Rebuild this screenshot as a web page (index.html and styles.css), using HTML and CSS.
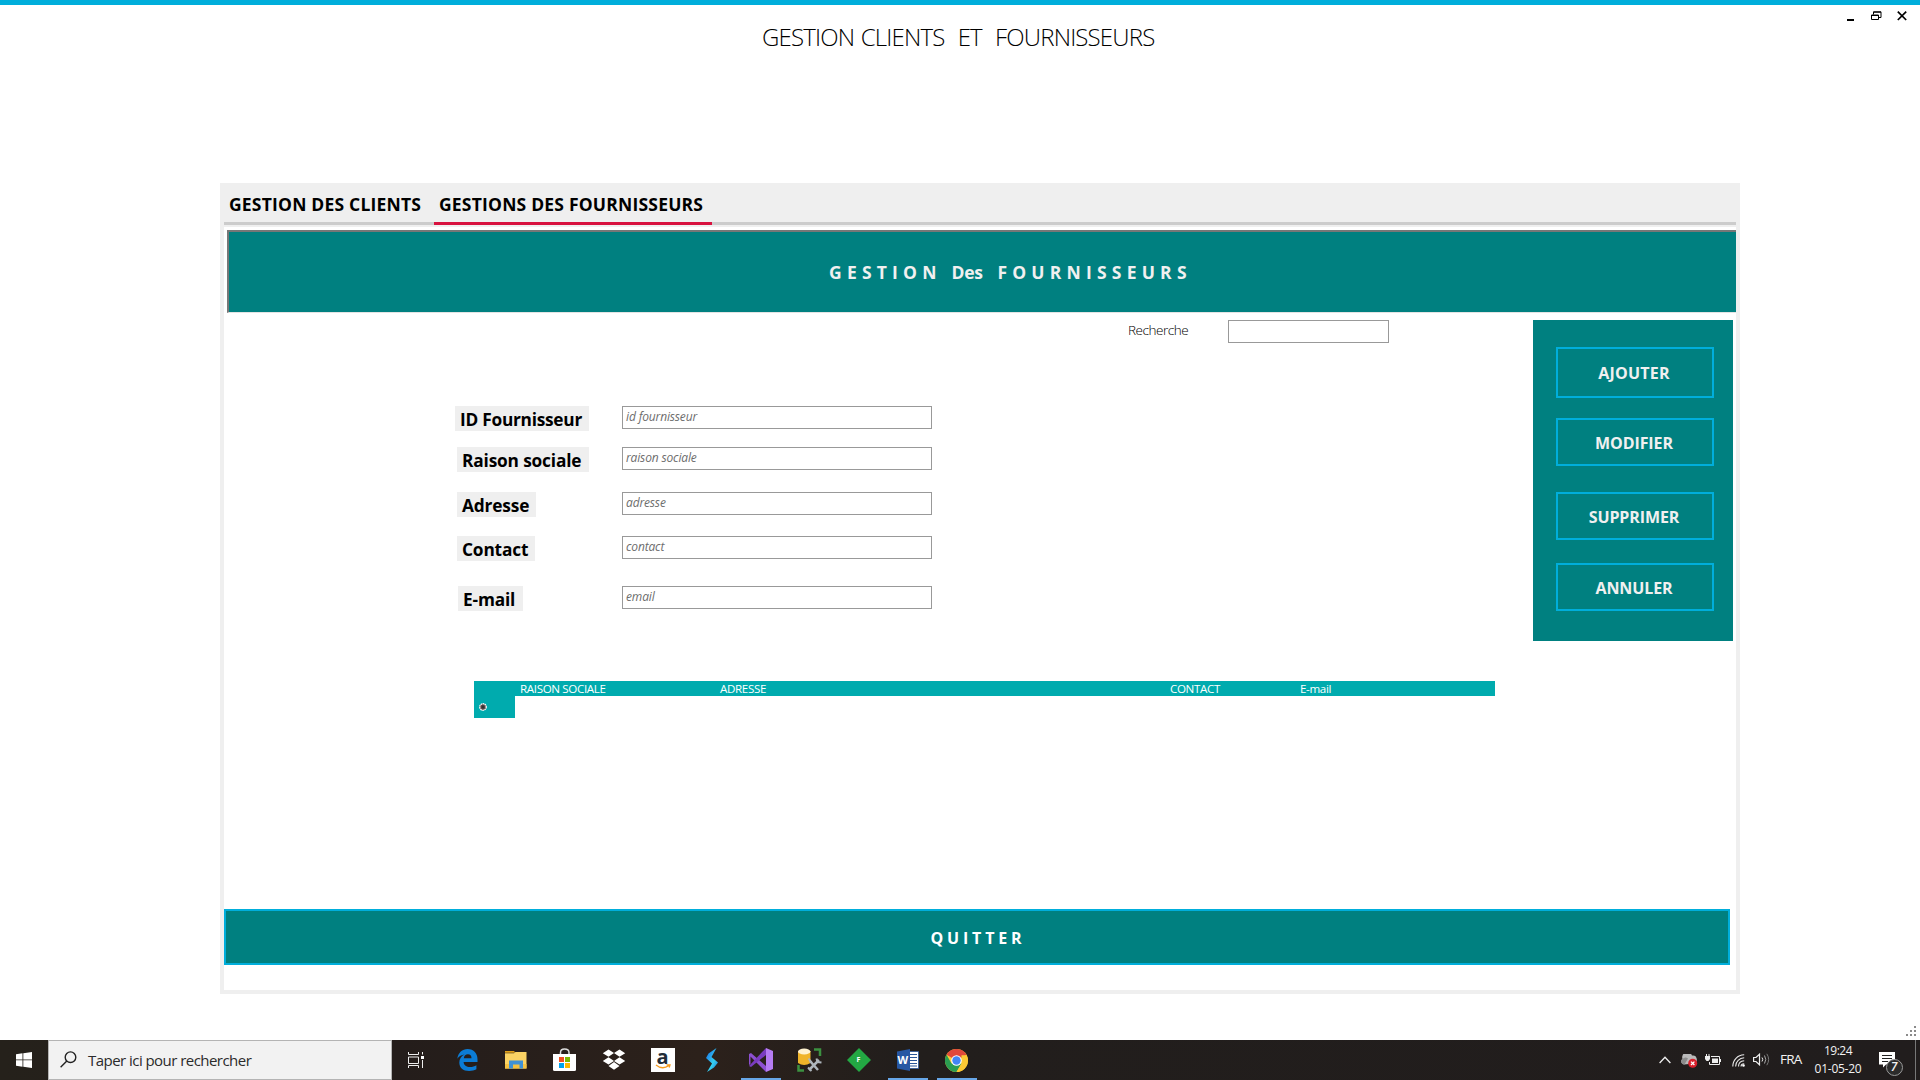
FILE: index.html
```
<!DOCTYPE html>
<html lang="fr">
<head>
<meta charset="utf-8">
<title>Gestion clients et fournisseurs</title>
<link rel="stylesheet" href="styles.css">
</head>
<body>
<main class="window">
  <header class="titlebar">
    <h1 class="title">GESTION CLIENTS  ET  FOURNISSEURS</h1>
    <div class="controls">
      <svg width="8" height="10" viewBox="0 0 8 10"><path d="M0 8h7v2H0z"/></svg>
      <svg width="11" height="10" viewBox="0 0 11 10"><path d="M2.5 3.5V.8H10V6.500H8M2.500 1.200H10" fill="none" stroke="#000"/><path d="M.5 4H7.500V8.500H.5zM.5 4.500H7.500" fill="none" stroke="#000"/></svg>
      <svg width="10" height="10" viewBox="0 0 10 10"><path d="M.8.6 9.200 9M9.200.6.8 9" stroke="#000" stroke-width="1.700"/></svg>
    </div>
  </header>

  <section class="panel">
    <nav class="tabs">
      <a class="tab">GESTION DES CLIENTS</a>
      <a class="tab tab-active">GESTIONS DES FOURNISSEURS</a>
    </nav>
    <div class="page">
      <h2 class="banner">G E S T I O N   <span class="small-word">Des</span>   F O U R N I S S E U R S</h2>
      <div class="body">
        <form class="form">
          <label class="row"><span class="label">ID Fournisseur</span><input class="field" placeholder="id fournisseur"></label>
          <label class="row row-2"><span class="label">Raison sociale</span><input class="field" placeholder="raison sociale"></label>
          <label class="row row-3"><span class="label">Adresse</span><input class="field" placeholder="adresse"></label>
          <label class="row row-4"><span class="label">Contact</span><input class="field" placeholder="contact"></label>
          <label class="row row-5"><span class="label">E-mail</span><input class="field" placeholder="email"></label>
        </form>
        <label class="search"><span class="search-label">Recherche</span><input class="search-field"></label>
        <aside class="actions">
          <button class="action action-add">AJOUTER</button>
          <button class="action action-edit">MODIFIER</button>
          <button class="action action-delete">SUPPRIMER</button>
          <button class="action action-cancel">ANNULER</button>
        </aside>
      </div>
      <div class="grid">
        <div class="grid-head">
          <span></span><span>RAISON SOCIALE</span><span>ADRESSE</span><span>CONTACT</span><span>E-mail</span>
        </div>
        <div class="grid-new">
          <svg width="8" height="8" viewBox="0 0 8 8"><circle cx="4" cy="4" r="3.300" fill="#6b5555" stroke="#fff" stroke-width="1.200" stroke-dasharray="1.600 .5"/><circle cx="4" cy="4" r="1.700" fill="#333"/></svg>
        </div>
      </div>
      <button class="quit">Q U I T T E R</button>
    </div>
  </section>
  <svg class="grip" width="10" height="10" viewBox="0 0 10 10"><path fill="#8a8a8a" d="M8 0h2v2H8zM4 4h2v2H4zM8 4h2v2H8zM0 8h2v2H0zM4 8h2v2H4zM8 8h2v2H8z"/></svg>
</main>

<footer class="taskbar">
  <div class="start"><svg width="16" height="16" viewBox="0 0 16 16" fill="#fff"><path d="M0 2.200 6.500 1.300V7.500H0zM7.300 1.200 16 0V7.500H7.300zM0 8.300H6.500V14.700L0 13.800zM7.300 8.300H16V16L7.300 14.800z"/></svg></div>
  <div class="finder">
    <svg width="17" height="17" viewBox="0 0 17 17" fill="none" stroke="#222" stroke-width="1.400"><circle cx="10.500" cy="6.200" r="5.300"/><path d="M6.800 10 .6 16.200"/></svg>
    <span>Taper ici pour rechercher</span>
  </div>
  <div class="app app-view"><svg width="17" height="16" viewBox="0 0 17 16" fill="none" stroke="#eee"><path d="M.5 0V2.500H10.500V0M.5 5H10.500V11.500H.5zM.5 16V13.500H10.500V16M14.500 0V2.500M14.500 8V16"/><path d="M13 4h3v3h-3z" fill="#fff" stroke="none"/></svg></div>
  <div class="app app-edge"><svg width="21" height="22" viewBox="0 0 21 22"><path fill="#0c7cd5" d="M.3 9.700C1.300 3.500 5.200 0 10.600 0 16.800 0 20.500 4.400 20.500 10.200V13H6.600C6.800 16.500 9.500 18 13 18 15.500 18 17.700 17.300 19.400 16.200V20.300C17.400 21.500 14.800 22 12.200 22 6 22 2.300 18.500 2.300 13.500 2.300 9.800 4.300 7 7.600 5.500 4.600 5.800 2 7.300.3 9.700zM6.800 9.300H14.500C14.500 6.800 13.300 5.300 10.900 5.300 8.600 5.300 7.100 6.900 6.800 9.300z"/></svg></div>
  <div class="app"><svg width="22" height="20" viewBox="0 0 22 20"><path fill="#e3a21a" d="M0 1h9l1.500 1.800H0z"/><path fill="#fbd364" d="M0 3.200h9L10.500 2H21.500V18.500H0z"/><path fill="#f5c243" d="M0 14h21.500v4.500H0z"/><path fill="#3f92d6" d="M4 10.500H18V18.500H14.500V14.500H8V18.500H4z"/></svg></div>
  <div class="app"><svg width="23" height="24" viewBox="0 0 23 24"><path d="M7.500 7V4.500C7.500 2 9.500 1 11.500 1S16 2 16 4.500V7" fill="none" stroke="#ddd" stroke-width="1.500"/><path d="M0 6H23V21.500Q23 23 21.500 23H1.500Q0 23 0 21.500z" fill="#fff"/><path fill="#f05022" d="M6 9h5v5H6z"/><path fill="#7eb900" d="M12 9h5v5h-5z"/><path fill="#00a3ee" d="M6 15h5v5H6z"/><path fill="#feb800" d="M12 15h5v5h-5z"/></svg></div>
  <div class="app"><svg width="24" height="22" viewBox="0 0 24 22" fill="#fff"><path d="M6.500.5 12 4 6.500 7.800.8 4.300zM17.500.5 23.200 4.300 17.500 7.800 12 4zM6.500 8.200 12 12 6.500 15.600.8 12zM17.500 8.200 23.200 12 17.500 15.600 12 12zM12 13 17.500 17 12 20.700 6.500 17z"/></svg></div>
  <div class="app"><div class="amazon">a<svg width="16" height="5" viewBox="0 0 16 5"><path d="M1 1C5 4.300 10 4.300 14 1.500M11.500.8H15L14.200 3.500" fill="none" stroke="#f79b1c" stroke-width="1.300"/></svg></div></div>
  <div class="app"><svg width="14" height="24" viewBox="0 0 14 24"><defs><linearGradient id="bolt" x2="1" y2="1"><stop stop-color="#1565e8"/><stop offset=".6" stop-color="#36d0ef"/><stop offset="1" stop-color="#1872e0"/></linearGradient></defs><path fill="url(#bolt)" d="M11.500 0 3.500 5.500 1 10 7 15.500 2 24 9 19.500 13 14.500 6.500 9z"/></svg></div>
  <div class="app running"><svg width="24" height="24" viewBox="0 0 24 24"><path fill="#8d4fd0" d="M0 6 2 5 17 18V24L1.500 8.500 1.500 16 0 17z"/><path fill="#7a3cc0" d="M0 18 17 0V7L2 19z"/><path fill="#b57cf2" d="M17 0 24 3V21L17 24z"/></svg></div>
  <div class="app"><svg width="25" height="24" viewBox="0 0 25 24"><path d="M17 1.500H23V8M1.500 17V22.500H7" fill="none" stroke="#3c9140" stroke-width="2.500"/><path fill="#f0b429" d="M1 3V15Q7 19 13.500 15V3z"/><ellipse cx="7.200" cy="3.500" rx="6.200" ry="3" fill="#fff2cf"/><path d="M12 22 22 12M13 13 21 22" stroke="#aeb6bd" stroke-width="2.500"/><path d="M19.500 10.500 20.500 14 24.500 14.500M11.500 10.500 14.500 14.500M11 19.500 14.500 23" fill="none" stroke="#aeb6bd" stroke-width="2"/></svg></div>
  <div class="app"><div class="diamond"><svg width="24" height="24" viewBox="0 0 24 24"><path fill="#23a843" d="M12 0 24 12 12 24 0 12z"/></svg><b>F</b></div></div>
  <div class="app running"><div class="word"><svg width="22" height="22" viewBox="0 0 22 22"><path fill="#fff" stroke="#2b579a" stroke-width=".8" d="M12 2.500H21.500V19.500H12z"/><path stroke="#2b579a" d="M13 5.500h7M13 8.500h7M13 11.500h7M13 14.500h7M13 17h7"/><path fill="#2757a3" d="M0 2.500 13 0V22L0 19.500z"/></svg><b>W</b></div></div>
  <div class="app running"><svg width="23" height="23" viewBox="0 0 24 24"><circle cx="12" cy="12" r="12" fill="#fcc934"/><path fill="#e0483b" d="M12 12 1.600 6A12 12 0 0 1 22.400 6z"/><path fill="#2a9d51" d="M12 12 6.800 15 1.600 6A12 12 0 0 0 12 24L17.200 15z"/><path fill="#fcc934" d="M12 24 17.200 15 17.200 6.500H22.600A12 12 0 0 1 12 24z"/><circle cx="12" cy="12" r="5.500" fill="#fff"/><circle cx="12" cy="12" r="4.400" fill="#4285f4"/></svg></div>

  <div class="tray">
    <svg width="12" height="8" viewBox="0 0 12 8"><path d="M.6 7 6 1.300 11.400 7" fill="none" stroke="#eee" stroke-width="1.300"/></svg>
    <svg class="cloud" width="17" height="14" viewBox="0 0 17 14"><path fill="#b9b9b9" d="M3 10.500A3 3 0 0 1 1.500 5 5 5 0 0 1 11 1.500 4 4 0 0 1 12.500 9.500z"/><path fill="#8b8b8b" d="M1.500 5A4 4 0 0 1 7 4.500L3.500 10.500A3 3 0 0 1 1.500 5z"/><circle cx="11.700" cy="9.300" r="4.500" fill="#d9202c"/><path d="M10 7.600 13.400 11M13.400 7.600 10 11" stroke="#fff" stroke-width="1.300"/></svg>
    <svg class="battery" width="16" height="13" viewBox="0 0 16 13" fill="none" stroke="#eee"><path d="M6 2.500H14.500V10.500H4.500V8"/><path d="M15.500 5V8"/><path fill="#eee" stroke="none" d="M7 4.500h6v4.500H7zM0 2h5v3L3.500 7h-2L0 5zM1 0h1v2h-1zM3.500 0h1v2h-1z"/></svg>
    <svg class="wifi" width="13" height="13" viewBox="0 0 13 13" fill="none" stroke="#e8e8e8" stroke-width="1.100"><path d="M.8 12.500C.8 6 5.500 1 12.200.8"/><path d="M3.600 12.500C3.600 7.500 7.500 4 12.200 3.800"/><path d="M6.500 12.500C6.500 9 9 7 12.200 6.800"/><path d="M9 12.500C9 11 10.200 9.800 12.200 9.800"/><circle cx="11.500" cy="11.500" r="1.300" fill="#fff" stroke="none"/></svg>
    <svg class="sound" width="17" height="13" viewBox="0 0 17 13" fill="none" stroke="#eee"><path stroke-width="1.200" d="M.6 4.500H3L6.500 1.200V11.800L3 8.500H.6z"/><path d="M9 4.500Q10.500 6.500 9 8.500"/><path d="M11.500 2.500Q14 6.500 11.500 10.500" stroke="#aaa"/><path d="M13.800.8Q17.500 6.500 13.800 12.200" stroke="#777"/></svg>
    <span class="lang">FRA</span>
    <div class="clock"><span class="time">19:24</span><span>01-05-20</span></div>
    <div class="notice"><svg width="26" height="26" viewBox="0 0 26 26"><path fill="#fff" d="M0 0H16V12.500H7L4 15.500V12.500H0z"/><path d="M3 3.500H13M3 6.500H13M3 9.500H9" stroke="#222"/><circle cx="15.500" cy="15.500" r="8" fill="#2b2b2b" stroke="#9a9a9a"/></svg><i class="count">7</i></div>
  </div>
</footer>
</body>
</html>
```
FILE: styles.css
```
* { box-sizing: border-box; }
body {
  margin: 0;
  width: 1920px;
  height: 1080px;
  display: flex;
  flex-direction: column;
  overflow: hidden;
  background: #fff;
  color: #000;
  font-family: "Open Sans", "Noto Sans", sans-serif;
}
svg { display: block; flex: none; }
button, input { font-family: inherit; border-radius: 0; margin: 0; padding: 0; outline: 0; }

.window { position: relative; height: 1040px; border-top: 5px solid #00aedb; }
.titlebar { display: flex; height: 178px; justify-content: space-between; }
.title {
  margin: 15px 0 0 762px;
  font-size: 24px;
  font-weight: 300;
  line-height: 34px;
  letter-spacing: -.83px;
  word-spacing: 1.200px;
  white-space: pre;
}
.controls { display: flex; margin: 6px 13px 0 0; height: 10px; gap: 15px; }
.controls svg:first-child { margin-right: 1px; }

/* tabbed panel */
.panel {
  width: 1520px;
  height: 811px;
  margin-left: 220px;
  padding: 0 4px 4px;
  background: #efefef;
}
.tabs { display: flex; height: 42px; margin-bottom: 2px; border-bottom: 3px solid #ccc; }
.tab {
  height: 42px;
  width: 210px;
  padding-left: 5px;
  font-size: 17.500px;
  font-weight: 700;
  line-height: 42px;
  letter-spacing: .2px;
  white-space: nowrap;
}
.tab-active { width: 278px; border-bottom: 3px solid #d8123f; }
.page { height: 763px; padding-top: 3px; background: #fff; }
.banner {
  height: 83px;
  margin: 0 0 0 3px;
  padding-left: 600px;
  border: solid;
  border-width: 2px 0 1px 2px;
  border-color: #777 #fff #e3e3e3 #777;
  background: #008080;
  color: #f0f0f0;
  font-size: 17.500px;
  line-height: 80px;
  letter-spacing: .33px;
  white-space: pre;
}
.small-word { letter-spacing: -.2px; }

.body { display: flex; height: 328px; }
.form { margin: 93px 0 0 231px; width: 477px; }
.row { display: grid; grid-template-columns: 167px 310px; height: 25px; }
.row-2 { margin-top: 16px; }
.row-3 { margin-top: 20px; }
.row-4 { margin-top: 19px; }
.row-5 { margin-top: 25px; }
.label {
  justify-self: start;
  width: 134px;
  height: 25px;
  padding-left: 5px;
  background: #efefef;
  font-size: 17.300px;
  font-weight: 700;
  line-height: 27px;
  letter-spacing: -.16px;
  white-space: nowrap;
}
.row:first-child .label { letter-spacing: -.26px; }
.row-2 .label { width: 132px; margin-left: 2px; }
.row-3 .label { width: 79px; margin-left: 2px; }
.row-4 .label { width: 78px; margin-left: 2px; }
.row-5 .label { width: 65px; margin-left: 3px; }
.field, .search-field { height: 23px; border: 1px solid #999; background: #fff; }
.field { padding: 0 3px 2px; font-size: 12px; letter-spacing: -.15px; }
.field::placeholder { color: #6d6d6d; font-style: italic; opacity: 1; }
.search { display: flex; margin: 7px 0 0 196px; height: 23px; }
.search-label { width: 100px; font-size: 13.500px; font-weight: 300; line-height: 20px; letter-spacing: -.45px; }
.search-field { width: 161px; }

.actions {
  display: flex;
  flex-direction: column;
  width: 200px;
  height: 321px;
  margin: 7px 3px 0 auto;
  padding: 27px 19px 0 23px;
  background: #008080;
}
.action {
  flex: none;
  height: 48px;
  border: 2px solid #00aedb;
  background: #008080;
  color: #f0f0f0;
  font-size: 16px;
  font-weight: 700;
  line-height: 44px;
  padding: 1px 2px 0 0;
  letter-spacing: -.1px;
}
.action-add { height: 51px; letter-spacing: .2px; }
.action-edit { margin-top: 20px; }
.action-delete { margin-top: 26px; }
.action-cancel { margin-top: 23px; }

/* supplier table */
.grid { width: 1021px; margin: 40px 0 0 250px; }
.grid-head {
  display: grid;
  grid-template-columns: 41px 200px 450px 130px 1fr;
  height: 15px;
  background: #00abae;
  color: #fff;
  font-size: 11.600px;
  line-height: 16px;
  letter-spacing: -.36px;
}
.grid-head span { padding-left: 5px; }
.grid-new { width: 41px; height: 22px; padding: 7px 0 0 5px; background: #00abae; }

.quit {
  display: block;
  width: 1506px;
  height: 56px;
  margin-top: 191px;
  border: 2px solid #00aedb;
  background: #008080;
  color: #fff;
  font-size: 16px;
  font-weight: 700;
  letter-spacing: -.17px;
  padding: 1px 2px 0 0;
}
.grip { position: absolute; right: 4px; bottom: 4px; }

/* taskbar */
.taskbar {
  display: flex;
  height: 40px;
  background: linear-gradient(90deg, #25211b, #241d1b 400px, #2c211b 700px, #221e1c 900px, #211d1d);
  color: #f2f2f2;
}
.start { width: 48px; padding: 12px 16px; }
.finder {
  display: flex;
  align-items: center;
  width: 344px;
  border: 1px solid #b4b4b4;
  background: #f2f2f2;
  color: #2b2b2b;
  padding-left: 11px;
  font-size: 15px;
  letter-spacing: -.54px;
}
.finder svg { margin: 0 11px 2px 0; }
.app { display: flex; align-items: center; justify-content: center; width: 49px; height: 40px; }
.app-view { width: 50px; padding-right: 2px; }
.app-edge { padding-left: 1px; }
.running {
  background: linear-gradient(#67a7e8, #67a7e8) 5px 100% / 40px 2px no-repeat;
}
.amazon {
  width: 24px;
  height: 24px;
  background: #fff;
  color: #222c38;
  font-size: 20px;
  font-weight: 700;
  line-height: 17px;
  text-align: center;
}
.amazon svg { margin: -1px 0 0 4px; }
.diamond, .word { position: relative; }
.diamond b, .word b { position: absolute; color: #fff; }
.diamond b { left: 0; width: 24px; text-align: center; top: 6px; font-size: 7px; line-height: 12px; }
.word b { left: 1px; top: 5px; font-size: 11px; line-height: 12px; }

.tray { display: flex; width: 261px; margin-left: auto; height: 40px; }
.tray > svg { margin-top: 16px; }
.tray > .cloud { margin: 14px 0 0 10px; }
.tray > .battery { margin: 14px 0 0 7px; }
.tray > .wifi { margin: 14px 0 0 11px; }
.tray > .sound { margin: 13px 0 0 8px; }
.lang { margin-left: 10px; width: 28px; font-size: 13.500px; line-height: 39px; letter-spacing: -.8px; }
.clock {
  display: flex;
  flex-direction: column;
  width: 60px;
  padding-top: 2px;
  font-size: 12px;
  line-height: 18px;
  letter-spacing: -.25px;
  text-align: center;
}
.time { letter-spacing: -.5px; }
.notice { position: relative; width: 37px; margin-left: 11px; padding-top: 12px; border-right: 1px solid #777; }
.count { position: absolute; left: 7px; top: 18px; width: 16px; font-size: 12px; font-weight: 600; line-height: 18px; text-align: center; }
```
